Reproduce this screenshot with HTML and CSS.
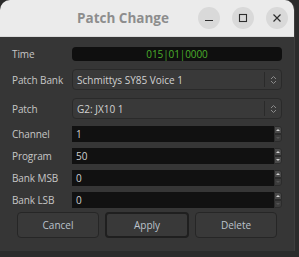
FILE: index.html
```html
<!DOCTYPE html>
<html>
<head>
<meta charset="utf-8">
<link rel="stylesheet" href="styles.css">
</head>
<body>
<div class="desk">
  <div class="win">
    <div class="titlebar">
      <div class="title">Patch Change</div>
      <div class="wbtns">
        <span class="wbtn"><svg width="10" height="10" viewBox="0 0 10 10"><path d="M1 7.5h8" stroke="#2e2e2e" stroke-width="1.2"/></svg></span>
        <span class="wbtn"><svg width="10" height="10" viewBox="0 0 10 10"><rect x="1.5" y="1.5" width="7" height="7" fill="none" stroke="#2e2e2e" stroke-width="1.1"/></svg></span>
        <span class="wbtn"><svg width="10" height="10" viewBox="0 0 10 10"><path d="M1.5 1.5l7 7M8.5 1.5l-7 7" stroke="#2e2e2e" stroke-width="1.2"/></svg></span>
      </div>
    </div>
    <div class="content">
      <div class="form">
        <div class="row r-time">
          <span class="lbl">Time</span>
          <div class="clock">015|01|0000</div>
        </div>
        <div class="row r-combo">
          <span class="lbl">Patch Bank</span>
          <div class="combo"><span class="ctext">Schmittys SY85 Voice 1</span><span class="csep"></span><span class="carrow"><svg width="7" height="10" viewBox="0 0 7 10"><path d="M1 4l2.5-2.5L6 4M1 6l2.5 2.5L6 6" fill="none" stroke="#8a8a8a" stroke-width="1"/></svg></span></div>
        </div>
        <div class="row r-combo r-patch">
          <span class="lbl">Patch</span>
          <div class="combo"><span class="ctext">G2: JX10 1</span><span class="csep"></span><span class="carrow"><svg width="7" height="10" viewBox="0 0 7 10"><path d="M1 4l2.5-2.5L6 4M1 6l2.5 2.5L6 6" fill="none" stroke="#8a8a8a" stroke-width="1"/></svg></span></div>
        </div>
        <div class="row r-spin">
          <span class="lbl">Channel</span>
          <div class="spin"><span class="stext">1</span><span class="sbtns"><span class="sb up"><i class="tri-up"></i></span><span class="sb dn off"><i class="tri-dn"></i></span></span></div>
        </div>
        <div class="row r-spin">
          <span class="lbl">Program</span>
          <div class="spin"><span class="stext">50</span><span class="sbtns"><span class="sb up"><i class="tri-up"></i></span><span class="sb dn"><i class="tri-dn"></i></span></span></div>
        </div>
        <div class="row r-spin">
          <span class="lbl">Bank MSB</span>
          <div class="spin"><span class="stext">0</span><span class="sbtns"><span class="sb up"><i class="tri-up"></i></span><span class="sb dn off"><i class="tri-dn"></i></span></span></div>
        </div>
        <div class="row r-spin">
          <span class="lbl">Bank LSB</span>
          <div class="spin"><span class="stext">0</span><span class="sbtns"><span class="sb up"><i class="tri-up"></i></span><span class="sb dn off"><i class="tri-dn"></i></span></span></div>
        </div>
      </div>
      <div class="buttons">
        <button class="btn">Cancel</button>
        <button class="btn def">Apply</button>
        <button class="btn">Delete</button>
      </div>
    </div>
  </div>
  <div class="bottom"></div>
</div>
</body>
</html>
```
FILE: styles.css
```css
html, body { margin: 0; padding: 0; }
body {
  width: 299px; height: 257px; overflow: hidden;
  background: #262626;
  font-family: "Open Sans", "Noto Sans", sans-serif;
}
.desk { width: 299px; height: 257px; background: #2b2b2b; }
.win {
  width: 295px; height: 251px;
  background: #363636;
  border-radius: 10px 10px 0 0;
  overflow: hidden;
  display: flex; flex-direction: column;
  border-right: 1px solid #3e3e3e;
  box-sizing: border-box;
}
.titlebar {
  height: 37px; flex: none;
  background: #ebebeb;
  border-bottom: 1px solid #dadada;
  box-sizing: border-box;
  display: flex; align-items: center;
}
.title {
  margin-left: 77px;
  font-size: 13.5px; font-weight: 700;
  color: #8d8d8d;
}
.wbtns { margin-left: auto; margin-right: 6px; display: flex; gap: 12px; }
.wbtn {
  width: 22px; height: 22px; border-radius: 50%;
  background: #d9d9d9;
  display: flex; align-items: center; justify-content: center;
}
.content { padding: 10px 12px 0 12px; display: flex; flex-direction: column; }
.form { display: flex; flex-direction: column; }
.row { display: flex; align-items: center; }
.lbl { width: 60px; flex: none; font-size: 10px; color: #c6c6c6; letter-spacing: -0.1px; }
.r-time { height: 14px; }
.clock {
  flex: 1; height: 14px; border-radius: 4px; background: #0f0f0f;
  color: #4cb02c; font-size: 10px; line-height: 14px; text-align: center;
  letter-spacing: -0.1px;
}
.r-combo { margin-top: 8px; height: 21px; }
.combo {
  flex: 1; height: 21px; box-sizing: border-box;
  background: #393939; border: 1px solid #2a2a2a; border-radius: 4px;
  display: flex; align-items: center;
}
.ctext { flex: 1; padding-left: 4px; font-size: 10px; color: #d2d2d2; }
.csep { width: 1px; height: 15px; background: #2a2a2a; }
.carrow { width: 16px; display: flex; justify-content: center; }
.r-spin { margin-top: 6px; height: 16px; }
.r-combo + .r-spin { margin-top: 7px; }
.spin { flex: 1; height: 16px; display: flex; }
.stext {
  flex: 1; background: #111111; font-size: 10px; color: #d0d0d0;
  line-height: 16px; padding-left: 4px;
}
.sbtns { width: 8px; display: flex; flex-direction: column; }
.sb {
  height: 8px; background: #4a4a4a; display: flex; align-items: center; justify-content: center;
  border: 1px solid #2c2c2c; box-sizing: border-box;
}
.sb.up { border-radius: 0 3px 0 0; }
.sb.dn { border-radius: 0 0 3px 0; }
.sb.off { background: #3c3c3c; }
.tri-up { width: 0; height: 0; border-left: 2px solid transparent; border-right: 2px solid transparent; border-bottom: 2px solid #d0d0d0; }
.tri-dn { width: 0; height: 0; border-left: 2px solid transparent; border-right: 2px solid transparent; border-top: 2px solid #d0d0d0; }
.sb.off .tri-dn { border-top-color: #555; }
.buttons { margin-top: 4px; padding: 0 5px; display: flex; gap: 6px; }
.btn {
  flex: 1; height: 26px; box-sizing: border-box;
  background: #393939; border: 1px solid #262626; border-radius: 4px;
  color: #bcc3cc; font-family: "Open Sans", "Noto Sans", sans-serif; font-size: 10px;
  padding: 0;
}
.btn.def { border: 2px solid #1f1f1f; }
.bottom { height: 6px; }
```
